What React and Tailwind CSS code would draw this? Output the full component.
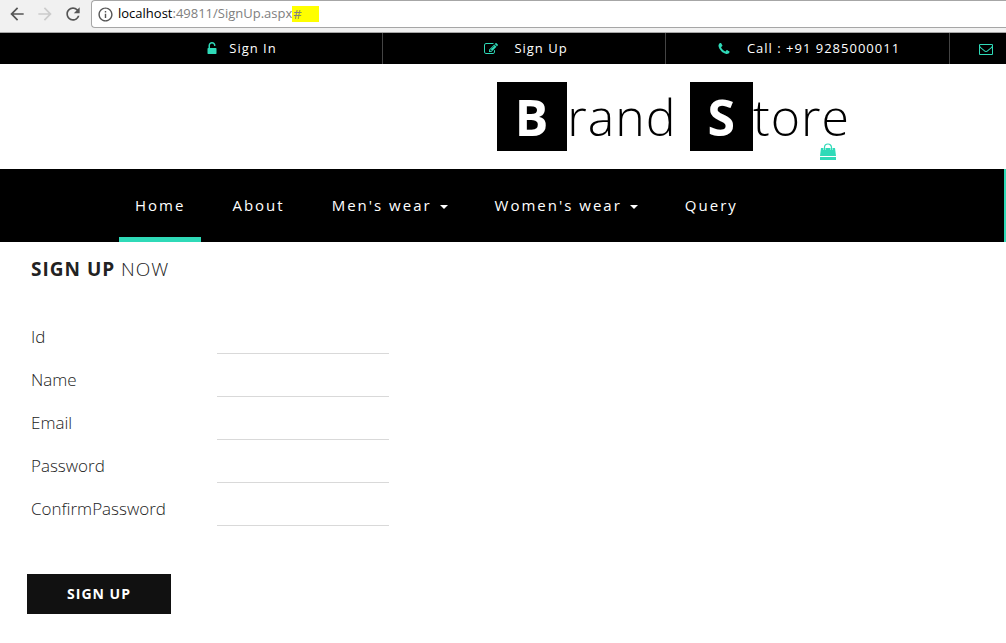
import { MdArrowBack, MdArrowForward, MdInfoOutline, MdRefresh } from "react-icons/md";

const ICONS = {
  unlock:
    "M1376 768q40 0 68 28t28 68v576q0 40-28 68t-68 28h-960q-40 0-68-28t-28-68v-576q0-40 28-68t68-28h32v-320q0-185 131.5-316.5t316.5-131.5 316.5 131.5 131.5 316.5q0 26-19 45t-45 19h-64q-26 0-45-19t-19-45q0-106-75-181t-181-75-181 75-75 181v320h736z",
  edit:
    "M888 1184l116-116-152-152-116 116v56h96v96h56zm440-720q-16-16-33 1l-350 350q-17 17-1 33t33-1l350-350q17-17 1-33zm80 594v190q0 119-84.5 203.5t-203.5 84.5h-832q-119 0-203.5-84.5t-84.5-203.5v-832q0-119 84.5-203.5t203.5-84.5h832q63 0 117 25 15 7 18 23 3 17-9 29l-49 49q-14 14-32 8-23-6-45-6h-832q-66 0-113 47t-47 113v832q0 66 47 113t113 47h832q66 0 113-47t47-113v-126q0-13 9-22l64-64q15-15 35-7t20 29zm-96-738l288 288-672 672h-288v-288zm444 132l-92 92-288-288 92-92q28-28 68-28t68 28l152 152q28 28 28 68t-28 68z",
  phone:
    "M1600 1240q0 27-10 70.5t-21 68.5q-21 50-122 106-94 51-186 51-27 0-53-3.5t-57-12.5-47-14.5-55.5-20.5-49.5-18q-98-35-175-83-127-79-264-216t-216-264q-48-77-83-175-3-9-18-49.5t-20.5-55.5-14.5-47-12.5-57-3.5-53q0-92 51-186 56-101 106-122 25-11 68.5-21t70.5-10q14 0 21 3 18 6 53 76 11 19 30 54t35 63.5 31 53.5q3 4 17.5 25t21.5 35.5 7 28.5q0 20-28.5 50t-62 55-62 53-28.5 46q0 9 5 22.5t8.5 20.5 14 24 11.5 19q76 137 174 235t235 174q2 1 19 11.5t24 14 20.5 8.5 22.5 5q18 0 46-28.5t53-62 55-62 50-28.5q14 0 28.5 7t35.5 21.5 25 17.5q25 15 53.5 31t63.5 35 54 30q70 35 76 53 3 7 3 21z",
  envelope:
    "M1664 1504v-768q-32 36-69 66-268 206-426 338-51 43-83 67t-86.5 48.5-102.5 24.5h-2q-48 0-102.5-24.5t-86.5-48.5-83-67q-158-132-426-338-37-30-69-66v768q0 13 9.5 22.5t22.5 9.5h1472q13 0 22.5-9.5t9.5-22.5zm0-1051v-24.5l-.5-13-3-12.5-5.5-9-9-7.5-14-2.5h-1472q-13 0-22.5 9.5t-9.5 22.5q0 168 147 284 193 152 401 317 6 5 35 29.5t46 37.5 44.5 31.5 50.5 27.5 43 9h2q20 0 43-9t50.5-27.5 44.5-31.5 46-37.5 35-29.5q208-165 401-317 54-43 100.5-115.5t46.5-131.5zm128-37v1088q0 66-47 113t-113 47h-1472q-66 0-113-47t-47-113v-1088q0-66 47-113t113-47h1472q66 0 113 47t47 113z",
};

const navItems = [
  { label: "Home", active: true },
  { label: "About" },
  { label: "Men's wear", menu: true },
  { label: "Women's wear", menu: true },
  { label: "Query" },
];

const fields = [
  { id: "userId", label: "Id", type: "text" },
  { id: "name", label: "Name", type: "text" },
  { id: "email", label: "Email", type: "email" },
  { id: "password", label: "Password", type: "password" },
  { id: "confirm", label: "ConfirmPassword", type: "password" },
];

function Icon({ name }) {
  return (
    <svg viewBox="0 0 1792 1792" className="h-3.5 w-3.5 shrink-0 fill-[#2fdab8]" aria-hidden="true">
      <path d={ICONS[name]} />
    </svg>
  );
}

function BrowserBar() {
  return (
    <div className="flex h-[33px] items-start border-b border-[#a6a6a6] bg-[#f1f1f1]">
      <div className="flex h-7 w-[91px] shrink-0 items-center gap-2 pl-[7px]">
        <button type="button" aria-label="Back">
          <MdArrowBack className="h-5 w-5 text-[#555]" />
        </button>
        <button type="button" aria-label="Forward">
          <MdArrowForward className="h-5 w-5 text-[#ccc]" />
        </button>
        <button type="button" aria-label="Reload">
          <MdRefresh className="h-5 w-5 text-[#555]" />
        </button>
      </div>
      <div className="flex h-7 flex-1 items-center gap-1 rounded-l-sm border border-r-0 border-[#a6a6a6] bg-white pl-[5px] text-[13px] text-[#808080]">
        <MdInfoOutline className="h-[17px] w-[17px] text-[#555]" />
        <p className="flex items-center whitespace-nowrap">
          <span className="text-black">localhost</span>:49811/SignUp.aspx
          <mark className="h-4 w-[27px] bg-[#ffff00] pl-px leading-4 text-[#808080]">#</mark>
        </p>
      </div>
    </div>
  );
}

function TopBar() {
  return (
    <ul className="flex h-[31px] overflow-hidden bg-black pl-[99px] text-[13px] tracking-[1px] text-white">
      <li className="flex w-[284px] shrink-0 items-center justify-center border-r border-[#444]">
        <a href="#signin" className="flex items-center gap-2.5 pl-px"><Icon name="unlock" />Sign In</a>
      </li>
      <li className="flex w-[283px] shrink-0 items-center justify-center border-r border-[#444]">
        <a href="#signup" className="flex items-center gap-4 pl-1"><Icon name="edit" />Sign Up</a>
      </li>
      <li className="flex w-[284px] shrink-0 items-center justify-center gap-4 border-r border-[#444] pl-0.5">
        <Icon name="phone" />Call : +91 9285000011
      </li>
      <li className="flex flex-1 items-center pl-[29px]">
        <a href="#mail" aria-label="Mail"><Icon name="envelope" /></a>
      </li>
    </ul>
  );
}

function Brand() {
  return (
    <header className="flex h-[105px] justify-end bg-white pt-[18px] pr-[156px]">
      <h1 className="relative h-[69px] text-[50px] leading-[67px] font-light tracking-[1px] whitespace-nowrap text-black">
        <a href="#home" className="flex">
          <span className="bg-black px-[18px] pt-0.5 font-bold text-white">B</span>
          <span className="mr-3.5 pt-0.5">rand</span>
          <span className="bg-black px-[17px] pt-0.5 font-bold text-white">S</span>
          <span className="pt-0.5">tore</span>
        </a>
        <svg viewBox="0 0 18 18" className="absolute right-[13px] -bottom-2.5 h-[18px] w-[18px]" aria-hidden="true">
          <path d="M2 5h14l1 8H1zM1 14h16v3H1z" fill="#2fdab8" />
          <path d="M5.5 7V4.5a3.5 3.5 0 0 1 7 0V7" fill="none" stroke="#fff" strokeWidth="2" />
          <path d="M5.5 7V4.5a3.5 3.5 0 0 1 7 0V7" fill="none" stroke="#2fdab8" strokeWidth="1.2" />
        </svg>
      </h1>
    </header>
  );
}

function Nav() {
  return (
    <nav className="flex h-[73px] justify-between border-r-2 border-[#2fdab8] bg-black pl-[119px]">
      <ul className="flex gap-[15px] text-[15px] tracking-[2px] text-white">
        {navItems.map((item) => (
          <li key={item.label} className="flex">
            <a
              href="#nav"
              className={`flex items-center border-b-5 px-4 pt-1 whitespace-nowrap ${item.active ? "border-[#2fdab8]" : "border-transparent"}`}
            >
              {item.label}
              {item.menu && <span className="mt-1 ml-2 border-x-4 border-t-4 border-x-transparent border-t-white" />}
            </a>
          </li>
        ))}
      </ul>
    </nav>
  );
}

function SignUpForm() {
  return (
    <form className="px-[27px] pt-3.5 text-[#222]">
      <h2 className="pl-1 text-[19px] leading-[26px] font-light tracking-[1px]">
        <strong className="font-bold">SIGN UP</strong> NOW
      </h2>
      <div className="mt-[29px] pl-1">
        {fields.map((field) => (
          <div key={field.id} className="flex h-[43px] items-end">
            <label htmlFor={field.id} className="w-[186px] pb-1 text-[17px] leading-[26px] font-light">
              {field.label}
            </label>
            <input id={field.id} type={field.type} className="h-9 w-[172px] border-b border-[#d9d9d9] outline-none" />
          </div>
        ))}
      </div>
      <button type="button" className="mt-12 h-10 w-36 bg-[#111] text-sm font-bold tracking-[1px] text-white">
        SIGN UP
      </button>
    </form>
  );
}

export default function App() {
  return (
    <div className="min-h-screen overflow-hidden bg-white font-['Open_Sans',sans-serif]">
      <BrowserBar />
      <TopBar />
      <Brand />
      <Nav />
      <SignUpForm />
    </div>
  );
}
